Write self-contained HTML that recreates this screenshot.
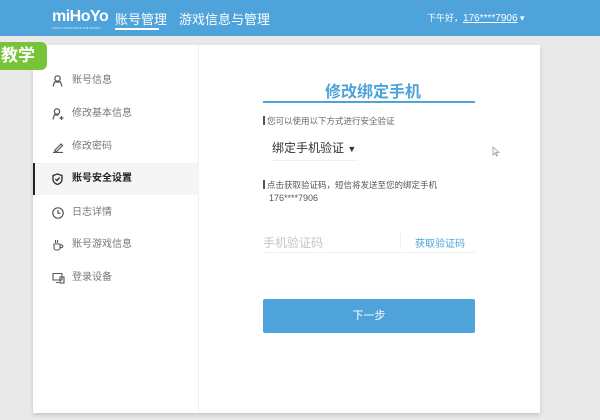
<!DOCTYPE html>
<html><head><meta charset="utf-8"><style>
*{margin:0;padding:0;box-sizing:border-box}
body{width:600px;height:420px;background:#e9e9e9;font-family:"Liberation Sans","Noto Sans CJK SC",sans-serif;position:relative;overflow:hidden}
.hd{position:absolute;left:0;top:0;width:600px;height:36px;background:#4ea3da;color:#fff}
.abs{position:absolute}
.card{position:absolute;left:33px;top:45px;width:507px;height:368px;background:#fff;box-shadow:0 2px 4px rgba(0,0,0,.15)}
.side{position:absolute;left:0;top:0;width:166px;height:368px;border-right:1px solid #f0f0f0}
.it{position:absolute;left:0;width:166px;height:32px;font-size:10px;color:#777;line-height:32px;padding-left:39px}
.it svg{position:absolute;left:19px;top:10px}
.act{background:#f5f5f5;color:#222;font-weight:bold;border-left:2px solid #222}
.t{position:absolute;white-space:nowrap}
</style></head><body>
<div class="hd">
<div class="t" style="left:52px;top:8px;font-size:16px;font-weight:bold;letter-spacing:-0.5px">miHoYo</div>
<div class="t" style="left:52px;top:26px;font-size:3px;opacity:.8">TECH OTAKUS SAVE THE WORLD</div>
<div class="t" style="left:115px;top:9px;font-size:13px">账号管理</div>
<div class="abs" style="left:115px;top:28px;width:44px;height:2px;background:#fff"></div>
<div class="t" style="left:179px;top:9px;font-size:13px">游戏信息与管理</div>
<div class="t" style="left:427px;top:11px;font-size:9px">下午好，<span style="text-decoration:underline;font-size:10px">176****7906</span> ▾</div>
</div>
<div class="card">
<div class="side">
<div class="it" style="top:20px"><svg width="11" height="12" viewBox="0 0 11 12" fill="none" stroke="#555" stroke-width="1.2"><circle cx="5.5" cy="3.5" r="2.7"/><path d="M1 11.5l1.5-4.5h6l1.5 4.5"/></svg>账号信息</div>
<div class="it" style="top:53px"><svg width="12" height="12" viewBox="0 0 12 12" fill="none" stroke="#555" stroke-width="1.2"><circle cx="5" cy="3.5" r="2.7"/><path d="M1 11.5l1.3-4.5h4.5M9.5 8v4M7.5 10h4"/></svg>修改基本信息</div>
<div class="it" style="top:86px"><svg width="12" height="12" viewBox="0 0 12 12" fill="none" stroke="#555" stroke-width="1.2"><path d="M3 9l6-6 1.5 1.5-6 6H3zM1 11.5h10"/></svg>修改密码</div>
<div class="it act" style="top:118px;padding-left:37px"><svg style="left:17px" width="11" height="12" viewBox="0 0 11 12" fill="none" stroke="#333" stroke-width="1.4"><path d="M5.5 1l4.5 1.5v4c0 2.5-2 4-4.5 5-2.5-1-4.5-2.5-4.5-5v-4z"/><path d="M3.3 6l1.6 1.5 2.8-3"/></svg>账号安全设置</div>
<div class="it" style="top:152px"><svg width="12" height="12" viewBox="0 0 12 12" fill="none" stroke="#555" stroke-width="1.2"><circle cx="6" cy="6" r="5.2"/><path d="M6 3v3.3h2.5"/></svg>日志详情</div>
<div class="it" style="top:184px"><svg width="12" height="12" viewBox="0 0 12 12" fill="none" stroke="#555" stroke-width="1.1"><path d="M2 5h6v4a2 2 0 0 1-2 2H4a2 2 0 0 1-2-2zM8 6h1.5a1.3 1.3 0 0 1 0 2.6H8M3.5 1v3M5.5 1v3"/></svg>账号游戏信息</div>
<div class="it" style="top:217px"><svg width="13" height="12" viewBox="0 0 13 12" fill="none" stroke="#555" stroke-width="1.1"><path d="M1 1.5h9v6.5H1zM4 10.5h3"/><rect x="8" y="5" width="4" height="6"/></svg>登录设备</div>
</div>
<div class="t" style="left:292px;top:33px;font-size:16px;font-weight:bold;color:#4ea3da">修改绑定手机</div>
<div class="abs" style="left:230px;top:56px;width:212px;height:2px;background:#4ea3da"></div>
<div class="abs" style="left:230px;top:71px;width:1.5px;height:9px;background:#555"></div>
<div class="t" style="left:234px;top:70px;font-size:8.5px;color:#666">您可以使用以下方式进行安全验证</div>
<div class="t" style="left:239px;top:94px;font-size:12px;color:#333">绑定手机验证 <span style="font-size:9px">▼</span></div>
<div class="abs" style="left:239px;top:115px;width:86px;height:1px;background:#f0f0f0"></div>
<div class="abs" style="left:230px;top:135px;width:1.5px;height:9px;background:#555"></div>
<div class="t" style="left:234px;top:134px;font-size:8.5px;color:#555">点击获取验证码，短信将发送至您的绑定手机</div>
<div class="t" style="left:236px;top:148px;font-size:9px;color:#555">176****7906</div>
<div class="t" style="left:230px;top:189px;font-size:12px;color:#c4c4c4">手机验证码</div>
<div class="abs" style="left:367px;top:186px;width:1px;height:18px;background:#f2f2f2"></div>
<div class="t" style="left:382px;top:190px;font-size:10px;color:#4ea3da">获取验证码</div>
<div class="abs" style="left:230px;top:207px;width:212px;height:1px;background:#f0f0f0"></div>
<div class="abs" style="left:230px;top:254px;width:212px;height:34px;background:#4ea3da;border-radius:2px;color:#fff;font-size:11px;text-align:center;line-height:34px">下一步</div>
</div>
<div class="abs" style="left:0;top:42px;width:47px;height:28px;background:#77c43a;border-radius:0 6px 6px 0;color:#fff;font-size:17px;font-weight:bold;line-height:28px;padding-left:1px">教学</div>
<svg class="abs" style="left:492px;top:146px" width="8" height="11" viewBox="0 0 8 11"><path d="M1 1v8l2-2 1.5 3 1-.5L4 6.5h3z" fill="#fff" stroke="#999" stroke-width=".8"/></svg>
</body></html>
